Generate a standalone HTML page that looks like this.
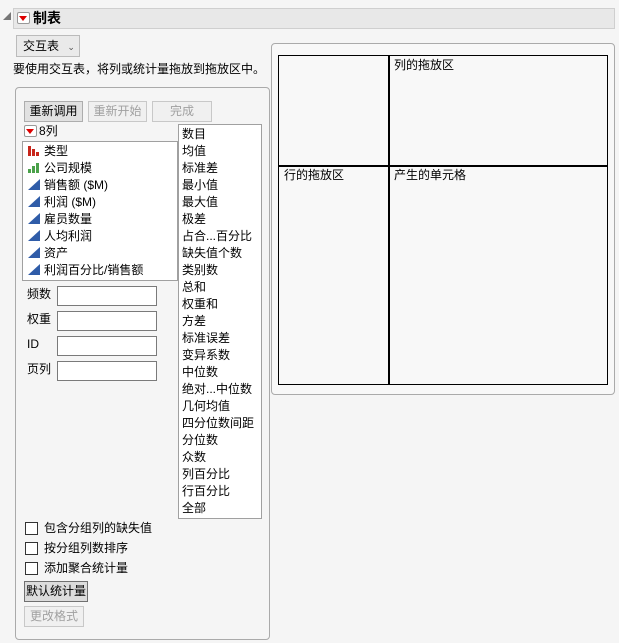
<!DOCTYPE html>
<html><head><meta charset="utf-8"><style>
*{box-sizing:border-box;margin:0;padding:0}
body{width:619px;height:643px;background:#f5f5f5;font-family:"Liberation Sans","Noto Sans CJK SC",sans-serif;font-size:12px;color:#000;position:relative;overflow:hidden}
.a{position:absolute;white-space:nowrap}
.btn{position:absolute;height:21px;border:1px solid #adadad;background:#e1e1e1;font-size:12px;text-align:center;line-height:19px}
.dis{color:#a0a0a0;border-color:#c8c8c8;background:#f0f0f0}
.list{position:absolute;background:#fff;border:1px solid #a0a0a0}
.row{height:17px;line-height:17px;padding-left:3px}
.inp{position:absolute;left:57px;width:100px;height:20px;background:#fff;border:1px solid #7a7a7a}
.cb{position:absolute;left:25px;width:13px;height:13px;border:1px solid #333;background:#fff}
.tri{display:inline-block;width:0;height:0;border-left:5px solid transparent;border-right:5px solid transparent;border-top:6px solid #d00}
.rb{position:absolute;width:13px;height:12px;border:1px solid #999;background:#fff;border-radius:2px}
.rb i{position:absolute;left:1px;top:3px;width:0;height:0;border-left:4.5px solid transparent;border-right:4.5px solid transparent;border-top:5px solid #d00}
</style></head><body>
<div class="a" style="left:3px;top:12px;width:0;height:0;border-left:8px solid transparent;border-bottom:8px solid #777"></div>
<div class="a" style="left:13px;top:8px;width:602px;height:21px;background:#e8e8e8;border:1px solid #cfcfcf"></div>
<div class="rb" style="left:17px;top:12px"><i></i></div>
<div class="a" style="left:33px;top:9px;font-size:14px;font-weight:bold;line-height:18px">制表</div>

<div class="a" style="left:16px;top:35px;width:64px;height:22px;border:1px solid #bbb;background:#eaeaea;line-height:20px;padding-left:6px">交互表 <span style="font-size:9px;color:#555;margin-left:5px">&#8964;</span></div>
<div class="a" style="left:13px;top:61px;line-height:16px">要使用交互表，将列或统计量拖放到拖放区中。</div>

<div class="a" style="left:15px;top:87px;width:255px;height:553px;border:1px solid #aaa;border-radius:4px;background:#f5f5f5"></div>
<div class="btn" style="left:24px;top:101px;width:59px">重新调用</div>
<div class="btn dis" style="left:88px;top:101px;width:59px">重新开始</div>
<div class="btn dis" style="left:152px;top:101px;width:60px">完成</div>
<div class="rb" style="left:24px;top:125px"><i></i></div>
<div class="a" style="left:39px;top:123px;line-height:16px">8列</div>

<div class="list" style="left:22px;top:141px;width:156px;height:140px;padding-top:1px">
<div class="row"><svg width="14" height="12" style="vertical-align:-1px;margin:0 3px 0 1px"><rect x="1" y="2" width="3" height="10" fill="#c8261b"/><rect x="5" y="5" width="3" height="7" fill="#c8261b"/><rect x="9" y="8" width="3" height="4" fill="#c8261b"/></svg>类型</div>
<div class="row"><svg width="14" height="12" style="vertical-align:-1px;margin:0 3px 0 1px"><rect x="1" y="8" width="3" height="4" fill="#4aa14a"/><rect x="5" y="5" width="3" height="7" fill="#4aa14a"/><rect x="9" y="2" width="3" height="10" fill="#4aa14a"/></svg>公司规模</div>
<div class="row"><svg width="14" height="12" style="vertical-align:-1px;margin:0 3px 0 1px"><polygon points="1,12 13,1 13,12" fill="#2f5ca8"/></svg>销售额 ($M)</div>
<div class="row"><svg width="14" height="12" style="vertical-align:-1px;margin:0 3px 0 1px"><polygon points="1,12 13,1 13,12" fill="#2f5ca8"/></svg>利润 ($M)</div>
<div class="row"><svg width="14" height="12" style="vertical-align:-1px;margin:0 3px 0 1px"><polygon points="1,12 13,1 13,12" fill="#2f5ca8"/></svg>雇员数量</div>
<div class="row"><svg width="14" height="12" style="vertical-align:-1px;margin:0 3px 0 1px"><polygon points="1,12 13,1 13,12" fill="#2f5ca8"/></svg>人均利润</div>
<div class="row"><svg width="14" height="12" style="vertical-align:-1px;margin:0 3px 0 1px"><polygon points="1,12 13,1 13,12" fill="#2f5ca8"/></svg>资产</div>
<div class="row"><svg width="14" height="12" style="vertical-align:-1px;margin:0 3px 0 1px"><polygon points="1,12 13,1 13,12" fill="#2f5ca8"/></svg>利润百分比/销售额</div>
</div>

<div class="list" style="left:178px;top:124px;width:84px;height:395px;padding-top:1px">
<div class="row">数目</div><div class="row">均值</div><div class="row">标准差</div><div class="row">最小值</div><div class="row">最大值</div><div class="row">极差</div><div class="row">占合...百分比</div><div class="row">缺失值个数</div><div class="row">类别数</div><div class="row">总和</div><div class="row">权重和</div><div class="row">方差</div><div class="row">标准误差</div><div class="row">变异系数</div><div class="row">中位数</div><div class="row">绝对...中位数</div><div class="row">几何均值</div><div class="row">四分位数间距</div><div class="row">分位数</div><div class="row">众数</div><div class="row">列百分比</div><div class="row">行百分比</div><div class="row">全部</div>
</div>

<div class="a" style="left:27px;top:286px;line-height:16px">频数</div><div class="inp" style="top:286px"></div>
<div class="a" style="left:27px;top:311px;line-height:16px">权重</div><div class="inp" style="top:311px"></div>
<div class="a" style="left:27px;top:336px;line-height:16px">ID</div><div class="inp" style="top:336px"></div>
<div class="a" style="left:27px;top:361px;line-height:16px">页列</div><div class="inp" style="top:361px"></div>

<div class="cb" style="top:522px"></div><div class="a" style="left:44px;top:520px;line-height:16px">包含分组列的缺失值</div>
<div class="cb" style="top:542px"></div><div class="a" style="left:44px;top:540px;line-height:16px">按分组列数排序</div>
<div class="cb" style="top:562px"></div><div class="a" style="left:44px;top:560px;line-height:16px">添加聚合统计量</div>
<div class="btn" style="left:24px;top:581px;width:64px;border-color:#707070;background:#dcdcdc">默认统计量</div>
<div class="btn dis" style="left:24px;top:606px;width:60px">更改格式</div>

<div class="a" style="left:271px;top:43px;width:344px;height:352px;border:1px solid #aaa;border-radius:4px;background:#f8f8f8"></div>
<div class="a" style="left:278px;top:55px;width:330px;height:330px;border:1.5px solid #000"></div>
<div class="a" style="left:388px;top:55px;width:1.5px;height:330px;background:#000"></div>
<div class="a" style="left:278px;top:165px;width:330px;height:1.5px;background:#000"></div>
<div class="a" style="left:394px;top:57px;line-height:16px">列的拖放区</div>
<div class="a" style="left:284px;top:167px;line-height:16px">行的拖放区</div>
<div class="a" style="left:394px;top:167px;line-height:16px">产生的单元格</div>
</body></html>
